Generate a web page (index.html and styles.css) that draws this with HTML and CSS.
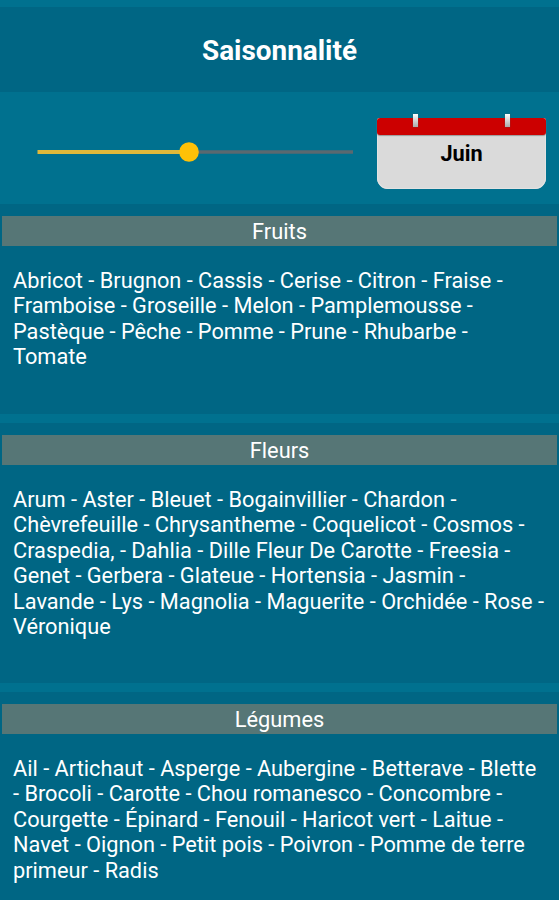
FILE: index.html
```html
<!DOCTYPE html>
<html lang="fr">
<head>
  <meta charset="UTF-8" />
  <meta name="viewport" content="width=device-width, initial-scale=1.0"/>
  <title>Saisonnalité</title>
  <link rel="stylesheet" href="styles.css">
</head>
<body>
  <header class="title-bar">
    <h1>Saisonnalité</h1>
  </header>

  <!-- Month picker -->
  <div class="month-row">
    <svg class="slider" width="336" height="24" viewBox="0 0 336 24">
      <path d="M9.5 12H161" stroke="#e0b83a" stroke-width="4"/>
      <path d="M161 12H325" stroke="#5a6970" stroke-width="3.500"/>
      <circle cx="161" cy="12" r="9.800" fill="#ffc107"/>
    </svg>
    <div class="calendar">
      <div class="calendar-top">
        <span class="ring"></span>
        <span class="ring"></span>
      </div>
      <div class="calendar-month">Juin</div>
    </div>
  </div>

  <!-- Products of the month -->
  <section class="category fruits">
    <h2>Fruits</h2>
    <p>Abricot - Brugnon - Cassis - Cerise - Citron - Fraise -<br>
      Framboise - Groseille - Melon - Pamplemousse -<br>
      Pastèque - Pêche - Pomme - Prune - Rhubarbe -<br>
      Tomate</p>
  </section>

  <section class="category fleurs">
    <h2>Fleurs</h2>
    <p>Arum - Aster - Bleuet - Bogainvillier - Chardon -<br>
      Chèvrefeuille - Chrysantheme - Coquelicot - Cosmos -<br>
      Craspedia, - Dahlia - Dille Fleur De Carotte - Freesia -<br>
      Genet - Gerbera - Glateue - Hortensia - Jasmin -<br>
      Lavande - Lys - Magnolia - Maguerite - Orchidée - Rose -<br>
      Véronique</p>
  </section>

  <section class="category legumes">
    <h2>Légumes</h2>
    <p>Ail - Artichaut - Asperge - Aubergine - Betterave - Blette<br>
      - Brocoli - Carotte - Chou romanesco - Concombre -<br>
      Courgette - Épinard - Fenouil - Haricot vert - Laitue -<br>
      Navet - Oignon - Petit pois - Poivron - Pomme de terre<br>
      primeur - Radis</p>
  </section>
</body>
</html>
```

FILE: styles.css
```css
* {
  box-sizing: border-box;
}

body {
  margin: 0;
  padding-top: 7px;
  height: 900px;
  overflow: hidden;
  font-family: Roboto, sans-serif;
  background-color: #00718f;
  color: #fff;
}

h1, h2, p {
  margin: 0;
}

.title-bar {
  height: 85px;
  background-color: #006684;
  text-align: center;
}

h1 {
  font-size: 27.9px;
  font-weight: bold;
  line-height: 88px;
}

.month-row {
  display: flex;
  height: 112px;
  padding-left: 28px;
}

.slider {
  margin-top: 48px;
}

.calendar {
  width: 169px;
  height: 71px;
  margin: 26px 0 0 13px;
  border-radius: 3px 3px 11px 11px;
  background-color: #dadada;
  box-shadow: inset 0 0 0 1px #e2e2e2;
}

.calendar-top {
  display: flex;
  justify-content: space-between;
  height: 17px;
  padding: 0 36px;
  border-radius: 3px;
  background-color: #cc0000;
  box-shadow: 0 1px 1px #999;
}

.ring {
  width: 5px;
  height: 13px;
  margin-top: -4px;
  background: linear-gradient(#fff, #aaa);
  box-shadow: 0 0 1px #555;
}

.calendar-month {
  color: #000;
  font-size: 21.7px;
  font-weight: bold;
  line-height: 38px;
  text-align: center;
}

.category {
  padding: 12px 2px 0;
  margin-bottom: 9px;
  background-color: #006684;
}

.category h2 {
  height: 30px;
  background-color: #567676;
  font-size: 21.8px;
  font-weight: normal;
  line-height: 31px;
  text-align: center;
}

.category p {
  padding: 21.5px 0 0 11px;
  font-size: 21.75px;
  line-height: 25.5px;
  white-space: nowrap;
}

.fruits {
  height: 210px;
}

.fleurs {
  height: 260px;
}

.legumes {
  height: 208px;
}
```
